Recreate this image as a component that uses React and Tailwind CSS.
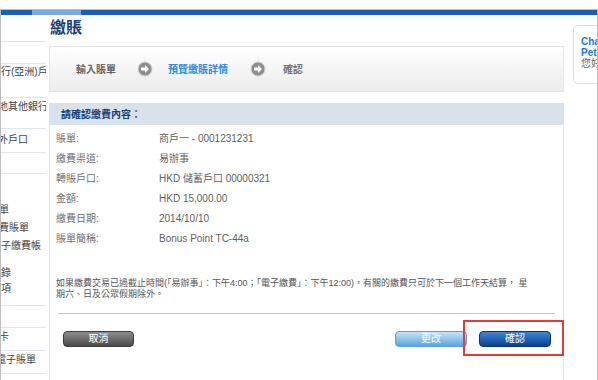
import React from 'react';

const font = "font-['Liberation_Sans','Noto_Sans_CJK_TC',sans-serif]";

const StepArrow = () => (
  <svg width="16" height="32" viewBox="0 0 16 32" className="shrink-0">
    <defs>
      <linearGradient id="vline" x1="0" y1="0" x2="0" y2="1">
        <stop offset="0" stopColor="#e8e8e8" stopOpacity="0" />
        <stop offset="0.5" stopColor="#cfcfcf" />
        <stop offset="1" stopColor="#e8e8e8" stopOpacity="0" />
      </linearGradient>
    </defs>
    <rect x="7.5" y="0" width="1" height="32" fill="url(#vline)" />
    <circle cx="8" cy="16" r="7" fill="#8e8e8e" stroke="#d4d4d4" strokeWidth="1" />
    <path d="M4 14.5h4v-2.5l4 4-4 4v-2.5H4z" fill="#ffffff" />
  </svg>
);

const Side = ({ h, line = true, children, className = '' }) => (
  <div
    className={`w-[45px] ${line ? 'border-b border-[#e2e7ee]' : ''} overflow-hidden ${className}`}
    style={{ height: h }}
  >
    {children}
  </div>
);

const rows = [
  ['賬單:', '商戶一 - 0001231231'],
  ['繳費渠道:', '易辦事'],
  ['轉賬戶口:', 'HKD 儲蓄戶口 00000321'],
  ['金額:', 'HKD 15,000.00'],
  ['繳費日期:', '2014/10/10'],
  ['賬單簡稱:', 'Bonus Point TC-44a'],
];

export default function App() {
  return (
    <div className={`w-[598px] h-[380px] bg-white pt-[9px] overflow-hidden ${font}`}>
      <div className="h-[371px] border border-b-0 border-[#bdbdbd] flex flex-col">
        {/* top bar */}
        <div className="h-[5px] flex">
          <div className="w-[31px] bg-[#1b5fb3]" />
          <div className="w-[49px] bg-[#7aa9de]" />
          <div className="flex-1 bg-[#1b5fb3]" />
        </div>

        <div className="flex flex-1">
          {/* Sidebar */}
          <div className="w-[48px] text-[10px] text-[#444] whitespace-nowrap">
            <Side h={27} />
            <Side h={22} />
            <Side h={34}>
              <div className="pt-[1px] leading-[14px] -ml-[30px]">恒生銀行(亞洲)戶口</div>
            </Side>
            <Side h={31}>
              <div className="pt-[2px] leading-[14px] -ml-[13px]">本地其他銀行</div>
            </Side>
            <Side h={24}>
              <div className="pt-[4px] leading-[14px] -ml-[13px]">海外戶口</div>
            </Side>
            <Side h={21} />
            <Side h={132}>
              <div className="pt-[27px] leading-[18px]">
                <div className="-ml-[32px]">繳費賬單</div>
                <div className="-ml-[12px]">繳費賬單</div>
                <div className="-ml-[10px]">電子繳費帳</div>
              </div>
              <div className="mt-[10px] leading-[16px]">
                <div className="-ml-[30px]">繳費記錄</div>
                <div className="-ml-[30px]">繳費事項</div>
              </div>
            </Side>
            <Side h={22} />
            <Side h={23}>
              <div className="pt-[2px] leading-[14px] -ml-[22px]">信用卡</div>
            </Side>
            <Side h={23}>
              <div className="pt-[2px] leading-[14px] -ml-[5px]">電子賬單</div>
            </Side>
          </div>

          {/* Main */}
          <div className="w-[515px] flex flex-col">
            <div className="h-[31px] pt-[3px] pl-[1px]">
              <h1 className="text-[16px] leading-[20px] font-bold text-[#1c3f78]">繳賬</h1>
            </div>

            {/* Steps */}
            <div className="h-[46px] border border-[#e6e6e6] bg-linear-to-b from-white to-[#ececec] flex items-center text-[10px] font-bold whitespace-nowrap">
              <span className="ml-[26px] w-[38px] shrink-0 text-[#666]">輸入賬單</span>
              <div className="ml-[23px]"><StepArrow /></div>
              <span className="ml-[15px] w-[60px] shrink-0 text-[#2c8ce0]">預覽繳賬詳情</span>
              <div className="ml-[22px]"><StepArrow /></div>
              <span className="ml-[17px] text-[#777]">確認</span>
            </div>

            <div className="h-[11px]" />

            <div className="h-[22px] bg-[#d9e1ea] flex items-center pl-[12px]">
              <span className="text-[10px] font-bold text-[#1c3f78]">請確認繳費內容：</span>
            </div>

            {/* Content */}
            <div className="flex-1 border-x border-[#e3e3e3] px-[6px] pt-[3px] text-[10px]">
              {rows.map(([k, v]) => (
                <div key={k} className="flex h-[20px] items-center">
                  <span className="w-[103px] text-[#707070]">{k}</span>
                  <span className="text-[#5f5f5f]">{v}</span>
                </div>
              ))}

              <p className="mt-[30px] text-[9px] leading-[11px] text-[#555] whitespace-nowrap">
                如果繳費交易已過截止時間(「易辦事」：下午4:00；「電子繳費」：下午12:00)，有關的繳費只可於下一個工作天結算， 星
                <br />
                期六、日及公眾假期除外。
              </p>

              <div className="mt-[13px] mx-[2px] h-[1px] bg-[#b9c7d7]" />

              <div className="relative mt-[17px] flex items-center">
                <button className="ml-[7px] w-[71px] h-[16px] rounded-[4px] border border-[#3c3c3c] bg-linear-to-b from-[#8e8e8e] to-[#4a4a4a] text-white text-[10px] leading-[14px]">
                  取消
                </button>
                <button className="ml-auto w-[72px] h-[16px] rounded-[4px] border border-[#5f9fd0] bg-linear-to-b from-[#c4e4f8] to-[#5aa6dc] text-white text-[10px] leading-[14px]">
                  更改
                </button>
                <button className="ml-[12px] mr-[6px] w-[72px] h-[16px] rounded-[4px] border border-[#0c3570] bg-linear-to-b from-[#3f88d8] to-[#0e3f8c] text-white text-[10px] leading-[14px]">
                  確認
                </button>
                <div className="absolute right-[-7px] top-[-11px] w-[101px] h-[36px] border-2 border-[#e53a3a]" />
              </div>
            </div>
          </div>

          {/* Right column */}
          <div className="flex-1 pl-[9px] pt-[10px] overflow-hidden">
            <div className="w-[60px] h-[59px] rounded-[5px] border border-[#dcdcdc] pl-[7px] pt-[10px] leading-[11px] text-[10px] whitespace-nowrap">
              <div className="font-bold text-[#1a7ad9]">Chan</div>
              <div className="font-bold text-[#1a7ad9]">Peter</div>
              <div className="text-[#666]">您好</div>
            </div>
          </div>
        </div>
      </div>
    </div>
  );
}
